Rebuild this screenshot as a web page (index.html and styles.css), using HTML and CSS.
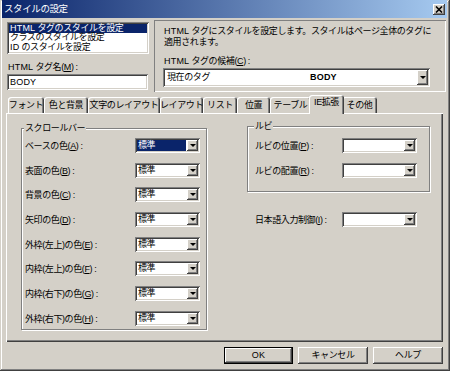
FILE: index.html
```html
<!DOCTYPE html>
<html lang="ja">
<head>
<meta charset="utf-8">
<title>スタイルの設定</title>
<link rel="stylesheet" href="styles.css">
</head>
<body>
<div class="dialog">
  <div class="titlebar">
    <span class="title">スタイルの設定</span>
    <span class="close raised"><svg width="8" height="7" viewBox="0 0 8 7"><path d="M1 0.5 L7 6.5 M7 0.5 L1 6.5" stroke="#000" stroke-width="1.6" fill="none"/></svg></span>
  </div>
  <div class="top">
    <div class="left">
      <div class="listbox sunken">
        <div class="item sel"><span class="lat">HTML</span> タグのスタイルを設定</div>
        <div class="item">クラスのスタイルを設定</div>
        <div class="item"><span class="lat">ID</span> のスタイルを設定</div>
      </div>
      <div class="label tagname"><span class="lat">HTML</span> タグ名(<u>M</u>) :</div>
      <div class="input sunken lat">BODY</div>
    </div>
    <div class="info">
      <p class="desc"><span class="lat">HTML</span> タグにスタイルを設定します。スタイルはページ全体のタグに<br>適用されます。</p>
      <div class="label"><span class="lat">HTML</span> タグの候補(<u>C</u>) :</div>
      <div class="select wide sunken"><span class="cur">現在のタグ</span><b class="tagval lat">BODY</b><span class="drop raised"></span></div>
    </div>
  </div>
  <div class="tabs">
    <div class="tab">フォント</div>
    <div class="tab">色と背景</div>
    <div class="tab">文字のレイアウト</div>
    <div class="tab">レイアウト</div>
    <div class="tab">リスト</div>
    <div class="tab">位置</div>
    <div class="tab">テーブル</div>
    <div class="tab active">IE拡張</div>
    <div class="tab">その他</div>
  </div>
  <div class="panel">
    <fieldset class="group scroll">
      <legend>スクロールバー</legend>
      <div class="rows">
        <div class="row"><span class="lbl">ベースの色(<u>A</u>) :</span><div class="select sunken"><span class="val hl">標準</span><span class="drop raised"></span></div></div>
        <div class="row"><span class="lbl">表面の色(<u>B</u>) :</span><div class="select sunken"><span class="val">標準</span><span class="drop raised"></span></div></div>
        <div class="row"><span class="lbl">背景の色(<u>C</u>) :</span><div class="select sunken"><span class="val">標準</span><span class="drop raised"></span></div></div>
        <div class="row"><span class="lbl">矢印の色(<u>D</u>) :</span><div class="select sunken"><span class="val">標準</span><span class="drop raised"></span></div></div>
        <div class="row"><span class="lbl">外枠(左上)の色(<u>E</u>) :</span><div class="select sunken"><span class="val">標準</span><span class="drop raised"></span></div></div>
        <div class="row"><span class="lbl">内枠(左上)の色(<u>F</u>) :</span><div class="select sunken"><span class="val">標準</span><span class="drop raised"></span></div></div>
        <div class="row"><span class="lbl">内枠(右下)の色(<u>G</u>) :</span><div class="select sunken"><span class="val">標準</span><span class="drop raised"></span></div></div>
        <div class="row"><span class="lbl">外枠(右下)の色(<u>H</u>) :</span><div class="select sunken"><span class="val">標準</span><span class="drop raised"></span></div></div>
      </div>
    </fieldset>
    <div class="right">
      <fieldset class="group ruby">
        <legend>ルビ</legend>
        <div class="rows ruby-rows">
          <div class="row"><span class="lbl">ルビの位置(<u>P</u>) :</span><div class="select sunken"><span class="val"></span><span class="drop raised"></span></div></div>
          <div class="row"><span class="lbl">ルビの配置(<u>R</u>) :</span><div class="select sunken"><span class="val"></span><span class="drop raised"></span></div></div>
        </div>
      </fieldset>
      <div class="row ime"><span class="lbl">日本語入力制御(<u>I</u>) :</span><div class="select sunken"><span class="val"></span><span class="drop raised"></span></div></div>
    </div>
  </div>
  <div class="buttons">
    <div class="btn ok lat">OK</div>
    <div class="btn">キャンセル</div>
    <div class="btn">ヘルプ</div>
  </div>
</div>
</body>
</html>
```
FILE: styles.css
```css
* { box-sizing: border-box; }
html, body { margin: 0; padding: 0; }
body {
  width: 450px;
  height: 371px;
  overflow: hidden;
  background: #d4d0c8;
  font-family: "Liberation Sans", "Noto Sans CJK JP", sans-serif;
  font-size: 9px;
  letter-spacing: -0.4px;
  color: #000;
}
u { text-decoration: underline; }
.lat { letter-spacing: 0.2px; }

.sunken {
  background: #fff;
  box-shadow: inset 1px 1px #808080, inset -1px -1px #fff, inset 2px 2px #404040, inset -2px -2px #d4d0c8;
}
.raised {
  background: #d4d0c8;
  box-shadow: inset -1px -1px #404040, inset 1px 1px #fff, inset -2px -2px #808080;
}

.dialog {
  width: 450px;
  height: 371px;
  padding: 0 3px 3px 2px;
  background: #d4d0c8;
  box-shadow: inset -1px -1px #404040, inset 1px 1px #d4d0c8, inset -2px -2px #808080, inset 2px 2px #fff;
  display: flex;
  flex-direction: column;
}

.titlebar {
  height: 18px;
  flex: none;
  display: flex;
  align-items: center;
  justify-content: space-between;
  padding: 0 2px 0 2px;
  background: linear-gradient(to right, #0a246a, #a6caf0);
  color: #fff;
}
.title { line-height: 12px; font-size: 9.5px; }
.close {
  width: 12px;
  height: 11px;
  display: flex;
  align-items: center;
  justify-content: center;
}

.top { display: flex; margin-top: 2px; height: 72px; flex: none; }
.left { width: 142px; margin-left: 5px; padding-top: 2px; }
.listbox { height: 32px; padding: 2px; }
.item { height: 9.4px; line-height: 9.4px; padding-left: 1px; white-space: nowrap; }
.item.sel { background: #0a246a; color: #fff; }
.label { line-height: 12px; white-space: nowrap; }
.tagname { margin-top: 7px; padding-left: 1px; }
.input { width: 141px; height: 16px; margin-top: 1px; padding: 2px 3px; line-height: 12px; }

.info {
  margin-left: 5px;
  width: 292px;
  padding: 6px 0 0 10px;
  box-shadow: inset 1px 1px #808080, inset -1px -1px #fff;
}
.desc { margin: 0; line-height: 11px; white-space: nowrap; }
.info .label { margin-top: 7px; }

.select {
  width: 65px;
  height: 15px;
  display: flex;
  padding: 2px;
  flex: none;
}
.select .val { flex: 1; line-height: 11px; padding-left: 1px; white-space: nowrap; }
.select .val.hl { background: #0a246a; color: #fff; margin-right: 1px; }
.drop {
  width: 11px;
  height: 11px;
  flex: none;
  display: flex;
  align-items: center;
  justify-content: center;
}
.drop::after {
  content: "";
  width: 0;
  height: 0;
  border-left: 3px solid transparent;
  border-right: 3px solid transparent;
  border-top: 3px solid #000;
}
.select.wide { width: 267px; height: 19px; margin: 1px 0 0 -1px; }
.select.wide .drop { height: 15px; }
.cur { width: 145px; padding-left: 2px; line-height: 15px; }
.tagval { flex: 1; line-height: 15px; font-weight: bold; }

.tabs {
  display: flex;
  align-items: flex-end;
  height: 19px;
  margin-top: 3px;
  padding-left: 6px;
  flex: none;
}
.tab {
  height: 17px;
  padding-top: 2px;
  line-height: 13px;
  text-align: center;
  white-space: nowrap;
  background: #d4d0c8;
  border-radius: 3px 3px 0 0;
  box-shadow: inset 1px 1px #fff, inset -1px 0 #404040, inset -2px 0 #808080;
}
.tab:nth-child(1) { width: 36px; }
.tab:nth-child(2) { width: 44px; }
.tab:nth-child(3) { width: 72px; }
.tab:nth-child(4) { width: 43px; }
.tab:nth-child(5) { width: 34px; }
.tab:nth-child(6) { width: 33px; }
.tab:nth-child(7) { width: 41px; }
.tab:nth-child(9) { width: 35px; }
.tab.active {
  position: relative;
  z-index: 2;
  width: 35px;
  height: 19px;
  margin: 0 -2px;
  padding-top: 1px;
}

.panel {
  position: relative;
  z-index: 1;
  margin: -1px 0 0 4px;
  width: 437px;
  height: 229px;
  flex: none;
  background: #d4d0c8;
  box-shadow: inset 1px 1px #fff, inset -1px -1px #404040, inset -2px -2px #808080;
  display: flex;
  align-items: flex-start;
  padding: 10px 0 0 15px;
}

.group {
  margin: 0;
  padding: 0;
  min-width: 0;
  border: 1px solid #808080;
  box-shadow: inset 1px 1px #fff, 1px 1px #fff;
}
.group legend {
  padding: 0 1px;
  line-height: 10px;
  background: #d4d0c8;
  white-space: nowrap;
}
.scroll { width: 186px; }
.scroll legend { margin-left: 2px; }
.rows {
  display: flex;
  flex-direction: column;
  gap: 9.7px;
  padding: 5px 0 3px 3px;
}
.row { display: flex; align-items: center; height: 15px; }
.lbl { width: 110px; white-space: nowrap; flex: none; }

.right { margin: -2px 0 0 40px; width: 183px; }
.ruby legend { margin-left: 6px; }
.ruby-rows { gap: 10px; padding: 7px 0 13px 7px; }
.ruby-rows .lbl, .ime .lbl { width: 87px; }
.ruby-rows .select, .ime .select { width: 75px; }
.ime { margin-top: 20px; padding-left: 8px; }

.buttons {
  display: flex;
  justify-content: flex-end;
  gap: 5px;
  margin-top: 5px;
  padding-right: 4px;
  flex: none;
}
.btn {
  width: 70px;
  height: 17px;
  line-height: 17px;
  text-align: center;
  background: #d4d0c8;
  box-shadow: inset -1px -1px #404040, inset 1px 1px #fff, inset -2px -2px #808080;
}
.btn.ok {
  width: 69px;
  box-shadow: inset 0 0 0 1px #000, inset -2px -2px #404040, inset 2px 2px #fff, inset -3px -3px #808080;
}
```
